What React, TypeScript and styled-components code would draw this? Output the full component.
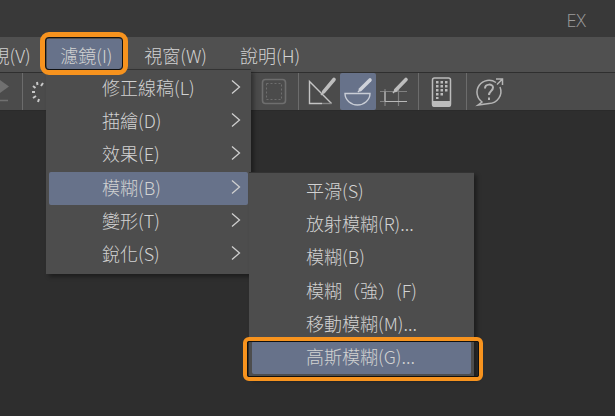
import React from 'react';
import styled, { createGlobalStyle } from 'styled-components';

const Global = createGlobalStyle`
	html, body { margin: 0; padding: 0; background: #2e2e2e; }
	body { font-family: "Noto Sans CJK TC", "Noto Sans", sans-serif; }
`;

const Page = styled.div`
	position: relative;
	width: 615px;
	height: 416px;
	overflow: hidden;
	display: flex;
	flex-direction: column;
	background: #2e2e2e;
	color: #d2d2d2;
`;

const TitleBar = styled.div`
	height: 37px;
	box-sizing: border-box;
	padding: 2px 29px 0 0;
	display: flex;
	justify-content: flex-end;
	align-items: center;
	background: #393939;
	font: 300 18px 'Open Sans', sans-serif;
	color: #9c9c9c;
`;

const MenuBar = styled.div`
	height: 35px;
	flex: none;
	display: flex;
	align-items: center;
	background: #505050;
	border-bottom: 1px solid #2f2f2f;
	font-size: 18px;
	font-weight: 300;
`;

const MenuLabel = styled.div<{ $cut?: boolean }>`
	padding: 0 16.5px;
	margin-left: ${(p) => (p.$cut ? '-25px' : '0')};
	white-space: nowrap;
`;

const ActiveLabel = styled.div`
	width: 75px;
	height: 32px;
	margin-right: 5.5px;
	box-sizing: border-box;
	padding-left: 13px;
	display: flex;
	align-items: center;
	background: #67728a;
	white-space: nowrap;
`;

const Toolbar = styled.div`
	height: 37px;
	flex: none;
	display: flex;
	align-items: center;
	background: #4b4b4b;
	border-bottom: 1px solid #2a2a2a;
`;

const Group = styled.div`
	height: 100%;
	display: flex;
	padding: 0 6px 0 5px;
	border-right: 1px solid #6c6c6c;
`;

const LastGroup = styled(Group)`
	border-right: none;
`;

const CutGroup = styled.div`
	width: 22px;
	height: 100%;
	overflow: hidden;
	border-right: 1px solid #6c6c6c;
`;

const HiddenGroup = styled.div`
	width: 223px;
	height: 100%;
	display: flex;
	align-items: center;
	padding-left: 5px;
`;

const Tool = styled.div<{ $active?: boolean }>`
	width: 36px;
	height: 37px;
	background: ${(p) => (p.$active ? '#67728a' : 'transparent')};
	border-radius: 2px;
	svg {
		display: block;
	}
`;

const Menu = styled.div<{ $x: number; $y: number; $w: number; $h: number }>`
	position: absolute;
	left: ${(p) => p.$x}px;
	top: ${(p) => p.$y}px;
	width: ${(p) => p.$w}px;
	height: ${(p) => p.$h}px;
	box-sizing: border-box;
	padding-top: 2px;
	background: #4d4d4d;
	box-shadow: 3px 3px 4px rgba(0, 0, 0, 0.35);
	border-top: 1px solid #333;
`;

const Item = styled.div<{ $active?: boolean; $pad: number }>`
	height: 33.2px;
	display: flex;
	align-items: center;
	justify-content: space-between;
	box-sizing: border-box;
	margin: 0 3px;
	padding: 0 7px 3px ${(p) => p.$pad}px;
	font-size: 18px;
	font-weight: 300;
	border-radius: 2px;
	background: ${(p) => (p.$active ? '#67728a' : 'transparent')};
`;

const Highlight = styled.div`
	position: absolute;
	box-sizing: border-box;
	border: 4px solid #f7931e;
	border-radius: 6px;
	outline: 1px solid #111;
	outline-offset: -5px;
`;

const MenuHighlight = styled(Highlight)`
	left: 40px;
	top: 32px;
	width: 88px;
	height: 43px;
	border-width: 5px;
	border-radius: 9px;
	outline-offset: -6px;
`;

const ItemHighlight = styled(Highlight)`
	left: 243px;
	top: 337px;
	width: 240px;
	height: 44px;
`;

const Chevron = () => (
	<svg width="10" height="16" viewBox="0 0 10 16">
		<path d="M1 1.5 L8.5 8 L1 14.5" fill="none" stroke="#cfcfcf" strokeWidth="1.3" />
	</svg>
);

const Spinner = () => (
	<svg width="20" height="37" viewBox="0 0 20 37" stroke="#c8c8c8" strokeWidth="2" fill="none">
		<path d="M15 10 L13 13 M9 9 L9.5 12 M5 13 L7.5 15 M4 19 H7 M5 25 L8 23 M10 29 L11 26" />
	</svg>
);

const Pen = ({ x1, y1, x2, y2, c }: { x1: number; y1: number; x2: number; y2: number; c: string }) => (
	<>
		<path d={`M${x1} ${y1} L${x1 + (x2 - x1) * 0.2} ${y1 + (y2 - y1) * 0.2}`} stroke={c} strokeWidth="1.5" />
		<path d={`M${x1 + (x2 - x1) * 0.2} ${y1 + (y2 - y1) * 0.2} L${x2} ${y2}`} stroke={c} strokeWidth="3.6" strokeLinecap="round" />
	</>
);

const icons = {
	marquee: (
		<svg width="36" height="37" viewBox="0 0 36 37" fill="none" stroke="#6e6e6e">
			<rect x="6.5" y="6.5" width="23" height="24" rx="3" strokeWidth="1.6" />
			<rect x="10.5" y="10.5" width="15" height="16" strokeDasharray="2 2" />
		</svg>
	),
	triangle: (
		<svg width="36" height="37" viewBox="0 0 36 37" fill="none" strokeWidth="1.4">
			<path d="M27.5 30.5 L5.5 8.5 V30.5 H18" stroke="#c4c4c4" />
			<path d="M18 30.5 H27.5" stroke="#868686" />
			<Pen x1={17} y1={22} x2={30} y2={6.5} c="#bdbdbd" />
		</svg>
	),
	bowl: (
		<svg width="36" height="37" viewBox="0 0 36 37" fill="none" strokeWidth="1.4">
			<path d="M5 20.5 H30 C30 27 24 32 17.5 32 C11 32 5 27 5 20.5 Z" stroke="#c9cdd6" />
			<Pen x1={18} y1={19} x2={30} y2={7} c="#cfd2da" />
		</svg>
	),
	grid: (
		<svg width="36" height="37" viewBox="0 0 36 37" fill="none" strokeWidth="1.2">
			<path d="M4 18.5 H31 M4 28.5 H31 M9 16 V33 M22.5 16 V33" stroke="#808080" />
			<path d="M9 28.5 V18.5 M9 28.5 H31" stroke="#b8b8b8" />
			<Pen x1={17} y1={20} x2={30} y2={6.5} c="#bdbdbd" />
		</svg>
	),
	phone: (
		<svg width="36" height="37" viewBox="0 0 36 37">
			<rect x="8.5" y="5" width="18" height="28" rx="2" fill="none" stroke="#bcbcbc" strokeWidth="1.5" />
			<path d="M8 28 H27 V32 Q27 34 25 34 H10 Q8 34 8 32 Z" fill="#bcbcbc" />
			<path d="M12 8 h2.5 v2.5 h-2.5z M16.5 8 h2.5 v2.5 h-2.5z M21 8 h2.5 v2.5 h-2.5z M12 12 h2.5 v2.5 h-2.5z M16.5 12 h2.5 v2.5 h-2.5z M21 12 h2.5 v2.5 h-2.5z M12 16 h2.5 v2.5 h-2.5z M16.5 16 h2.5 v2.5 h-2.5z M21 16 h2.5 v2.5 h-2.5z M12 20 h2.5 v2.5 h-2.5z M16.5 20 h2.5 v2.5 h-2.5z M12 24 h2.5 v2 h-2.5z" fill="#bcbcbc" />
		</svg>
	),
	help: (
		<svg width="36" height="37" viewBox="0 0 36 37" fill="none" stroke="#b5b5b5" strokeWidth="1.5">
			<path d="M24 9.5 A12 12 0 1 0 10 29 L6 32 L17 30.5 A12 12 0 0 0 28 14" />
			<path d="M24 6 H30.5 V12 M30.5 6 L25 11.5" />
			<path d="M13 15.5 C13 10.5 21 10.5 21 14.5 C21 18 17 18 17 22 M17 24.5 V27" strokeWidth="2" />
		</svg>
	),
};

const filters = ['修正線稿(L)', '描繪(D)', '效果(E)', '模糊(B)', '變形(T)', '銳化(S)'];
const blurs = ['平滑(S)', '放射模糊(R)...', '模糊(B)', '模糊（強）(F)', '移動模糊(M)...', '高斯模糊(G)...'];

const App = () => (
	<Page>
		<Global />
		<TitleBar>EX</TitleBar>
		<MenuBar>
			<MenuLabel $cut>視(V)</MenuLabel>
			<ActiveLabel>濾鏡(I)</ActiveLabel>
			<MenuLabel>視窗(W)</MenuLabel>
			<MenuLabel>說明(H)</MenuLabel>
		</MenuBar>
		<Toolbar>
			<CutGroup>
				<svg width="22" height="37" viewBox="0 0 22 37">
					<path d="M0 7 L9 13.5 L0 20 Z" fill="#707070" />
					<path d="M0 27.5 H8" stroke="#707070" strokeWidth="1.5" />
				</svg>
			</CutGroup>
			<HiddenGroup>
				<Spinner />
			</HiddenGroup>
			<Group>
				<Tool>{icons.marquee}</Tool>
			</Group>
			<Group>
				<Tool>{icons.triangle}</Tool>
				<Tool $active>{icons.bowl}</Tool>
				<Tool>{icons.grid}</Tool>
			</Group>
			<Group>
				<Tool>{icons.phone}</Tool>
			</Group>
			<LastGroup>
				<Tool>{icons.help}</Tool>
			</LastGroup>
		</Toolbar>
		<Menu $x={46} $y={69} $w={205} $h={205}>
			{filters.map((f, i) => (
				<Item key={f} $pad={53} $active={i === 3}>
					<span>{f}</span>
					<Chevron />
				</Item>
			))}
		</Menu>
		<Menu $x={249} $y={172} $w={225} $h={206}>
			{blurs.map((b, i) => (
				<Item key={b} $pad={54} $active={i === 5}>
					<span>{b}</span>
				</Item>
			))}
		</Menu>
		<MenuHighlight />
		<ItemHighlight />
	</Page>
);

export default App;
